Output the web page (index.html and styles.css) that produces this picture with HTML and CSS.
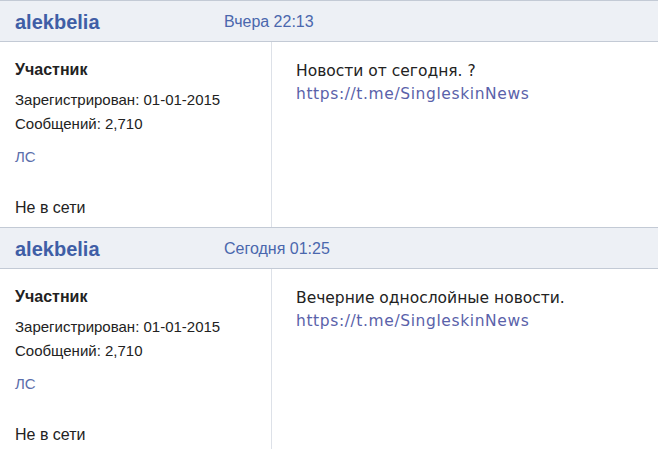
FILE: index.html
```html
<!DOCTYPE html>
<html>
<head>
<meta charset="utf-8">
<link rel="stylesheet" href="styles.css">
</head>
<body>
<div class="post">
  <div class="post-head">
    <span class="author">alekbelia</span>
    <span class="date">Вчера 22:13</span>
  </div>
  <div class="post-body">
    <div class="profile">
      <div class="rank">Участник</div>
      <div class="info">Зарегистрирован: 01-01-2015</div>
      <div class="info">Сообщений: 2,710</div>
      <div class="pm">ЛС</div>
      <div class="status">Не в сети</div>
    </div>
    <div class="content">
      <div>Новости от сегодня. ?</div>
      <a class="link" href="#">https://t.me/SingleskinNews</a>
    </div>
  </div>
</div>
<div class="post">
  <div class="post-head">
    <span class="author">alekbelia</span>
    <span class="date">Сегодня 01:25</span>
  </div>
  <div class="post-body">
    <div class="profile">
      <div class="rank">Участник</div>
      <div class="info">Зарегистрирован: 01-01-2015</div>
      <div class="info">Сообщений: 2,710</div>
      <div class="pm">ЛС</div>
      <div class="status">Не в сети</div>
    </div>
    <div class="content">
      <div>Вечерние однослойные новости.</div>
      <a class="link" href="#">https://t.me/SingleskinNews</a>
    </div>
  </div>
</div>
</body>
</html>
```
FILE: styles.css
```css
html, body {
  margin: 0;
  padding: 0;
  background: #ffffff;
}
body {
  font-family: "Liberation Sans", Arial, sans-serif;
  color: #222;
}
.post-head {
  display: flex;
  align-items: center;
  height: 42px;
  box-sizing: border-box;
  background: #edf0f5;
  border-top: 1px solid #c3cad5;
  border-bottom: 1px solid #c3cad5;
  padding-left: 15px;
  padding-top: 2px;
}
.author {
  width: 209px;
  font-weight: bold;
  font-size: 20px;
  color: #3f5ea6;
}
.date {
  font-size: 16px;
  color: #4a67ad;
}
.post-body {
  display: flex;
  height: 185px;
}
.profile {
  width: 256px;
  padding-left: 15px;
  border-right: 1px solid #dde1e8;
  box-sizing: content-box;
  padding-top: 19px;
}
.rank {
  font-weight: bold;
  font-size: 16px;
  line-height: 18px;
  margin-bottom: 9px;
}
.info {
  font-size: 15px;
  line-height: 24px;
}
.pm {
  font-size: 15px;
  color: #5b6eab;
  margin-top: 12px;
  line-height: 18px;
}
.status {
  font-size: 16px;
  margin-top: 33px;
  line-height: 18px;
}
.content {
  padding-left: 24px;
  padding-top: 18px;
  font-family: "DejaVu Sans", Verdana, sans-serif;
  font-size: 15.5px;
  line-height: 23px;
  color: #222;
}
.link {
  color: #5a62aa;
  text-decoration: none;
  letter-spacing: 0.6px;
}
```
